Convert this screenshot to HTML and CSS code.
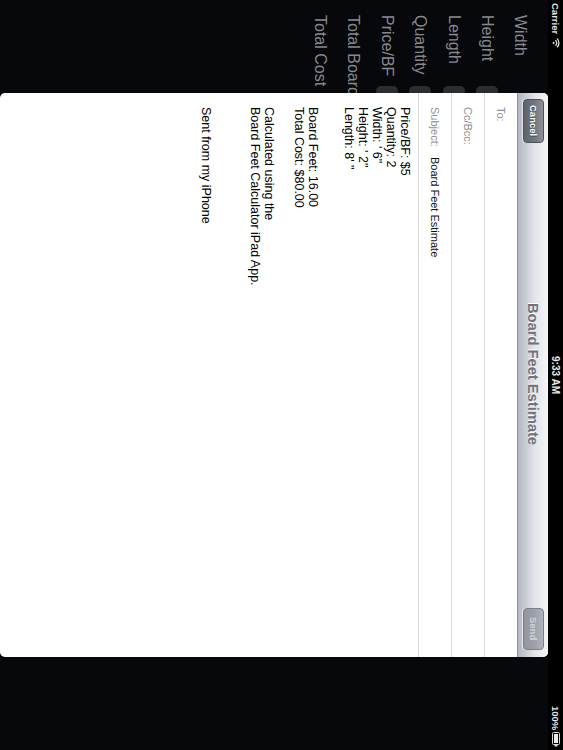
FILE: index.html
```html
<!DOCTYPE html>
<html lang="en">
<head>
    <meta charset="UTF-8">
    <meta name="viewport" content="width=device-width, initial-scale=1.0">
    <title>Board Feet Estimate</title>
    <link rel="stylesheet" href="styles.css">
</head>
<body>
    <div class="screen">
        <div class="statusbar">
            <div class="carrier">
                Carrier
                <svg width="8" height="10" viewBox="0 0 8 10">
                    <g transform="translate(8,0) rotate(90)">
                        <path d="M0.6 2.9 A6.2 6.2 0 0 1 9.4 2.9" fill="none" stroke="#e8e8e8" stroke-width="1.3"/>
                        <path d="M2.2 4.5 A4 4 0 0 1 7.8 4.5" fill="none" stroke="#e8e8e8" stroke-width="1.3"/>
                        <path d="M5 7.6 L3.6 6.1 A2 2 0 0 1 6.4 6.1 Z" fill="#e8e8e8"/>
                    </g>
                </svg>
            </div>
            <div class="clock">9:33 AM</div>
            <div class="battery">
                100%
                <svg width="8" height="15" viewBox="0 0 8 15">
                    <g transform="translate(8,0) rotate(90)">
                        <rect x="0.5" y="0.5" width="12" height="7" rx="1" fill="none" stroke="#d8d8d8"/>
                        <rect x="2" y="2" width="9" height="4" fill="#e8e8e8"/>
                        <rect x="13" y="2.5" width="1.5" height="3" fill="#d8d8d8"/>
                    </g>
                </svg>
            </div>
        </div>

        <div class="stage">
            <!-- calculator behind the sheet -->
            <div class="calc">
                <div class="calc-row"><span class="calc-label">Width</span></div>
                <div class="calc-row"><span class="calc-label">Height</span><span class="calc-input"></span></div>
                <div class="calc-row"><span class="calc-label">Length</span><span class="calc-input"></span></div>
                <div class="calc-row"><span class="calc-label">Quantity</span><span class="calc-input"></span></div>
                <div class="calc-row"><span class="calc-label">Price/BF</span><span class="calc-input"></span></div>
                <div class="calc-row"><span class="calc-label">Total Board Feet</span></div>
                <div class="calc-row"><span class="calc-label">Total Cost</span></div>
            </div>

            <!-- mail compose sheet -->
            <div class="sheet">
                <div class="navbar">
                    <div class="bar-btn">Cancel</div>
                    <div class="nav-title">Board Feet Estimate</div>
                    <div class="bar-btn disabled">Send</div>
                </div>
                <div class="field">To:</div>
                <div class="field">Cc/Bcc:</div>
                <div class="field">Subject:<span class="field-value">Board Feet Estimate</span></div>
                <div class="mail-body">
                    <p>Price/BF: $5<br>Quantity: 2<br>Width: ' 6"<br>Height: ' 2"<br>Length: 8' "</p>
                    <p class="group-totals">Board Feet: 16.00<br>Total Cost: $80.00</p>
                    <p class="group-credit">Calculated using the<br>Board Feet Calculator iPad App.</p>
                    <p class="group-sig">Sent from my iPhone</p>
                </div>
            </div>
        </div>
    </div>
</body>
</html>
```

FILE: styles.css
```css
html, body {
    margin: 0;
    padding: 0;
    overflow: hidden;
    background: #07080c;
}
body {
    font-family: "Liberation Sans", Arial, sans-serif;
}
/* the iPad is in landscape, so the whole screen reads top to bottom */
.screen {
    writing-mode: vertical-rl;
    inline-size: 750px;
    block-size: 563px;
    display: flex;
    flex-direction: column;
}
.statusbar {
    block-size: 15px;
    flex: none;
    background: #000;
    color: #e8e8e8;
    font-size: 9.5px;
    font-weight: bold;
    display: grid;
    grid-template-columns: 1fr auto 1fr;
    align-items: center;
    padding-inline: 3px;
}
.carrier {
    display: flex;
    align-items: center;
    gap: 4px;
}
.clock {
    font-size: 10px;
}
.battery {
    display: flex;
    align-items: center;
    justify-content: flex-end;
    gap: 2px;
}
.stage {
    flex: 1;
    position: relative;
}
.calc {
    padding-block-start: 11px;
    padding-inline-start: 15px;
}
.calc-row {
    block-size: 33.4px;
    display: flex;
    align-items: center;
}
.calc-label {
    inline-size: 71px;
    flex: none;
    white-space: nowrap;
    color: #88898e;
    font-size: 16px;
}
.calc-input {
    inline-size: 120px;
    block-size: 22px;
    border-radius: 5px;
    background: #2c2d31;
}
.sheet {
    position: absolute;
    inset-block: 0;
    inset-inline-start: 93px;
    inline-size: 564px;
    background: #fff;
    border-radius: 5px;
    overflow: hidden;
}
.navbar {
    block-size: 30px;
    border-block-end: 1px solid #8d919b;
    background: linear-gradient(to left, #f5f6f8, #e2e4e9 45%, #b3b7c1);
    display: grid;
    grid-template-columns: 1fr auto 1fr;
    align-items: center;
    padding-inline: 6px 7px;
}
.nav-title {
    color: #6e737e;
    font-size: 14.7px;
    font-weight: bold;
    text-shadow: -1px 0 0 #fff;
}
.bar-btn {
    inline-size: 44px;
    block-size: 21px;
    box-sizing: border-box;
    border: 1px solid #4e5159;
    border-radius: 4px;
    background: linear-gradient(to left, #8d9099, #6f727b 50%, #62656e);
    color: #fff;
    font-size: 9.5px;
    font-weight: bold;
    text-align: center;
    line-height: 19px;
    text-shadow: 1px 0 0 #444;
    box-shadow: -1px 0 0 rgba(255, 255, 255, 0.6);
}
.bar-btn.disabled {
    inline-size: 42px;
    justify-self: end;
    border-color: #7c8089;
    background: linear-gradient(to left, #b0b3ba, #9c9fa7 50%, #93969e);
    color: #d2d4d9;
    text-shadow: none;
}
.field {
    block-size: 32px;
    border-block-end: 1px solid #d9d9d9;
    display: flex;
    align-items: center;
    padding-inline-start: 14px;
    color: #8e8f94;
    font-size: 11px;
}
.field-value {
    color: #111;
    margin-inline-start: 10px;
}
.mail-body {
    padding-block-start: 6px;
    padding-inline: 14px;
    color: #000;
    font-size: 12.5px;
    line-height: 14px;
}
.mail-body p {
    margin: 0;
}
.mail-body .group-totals {
    margin-block-start: 22px;
}
.mail-body .group-credit {
    margin-block-start: 16px;
}
.mail-body .group-sig {
    margin-block-start: 35px;
}
```
